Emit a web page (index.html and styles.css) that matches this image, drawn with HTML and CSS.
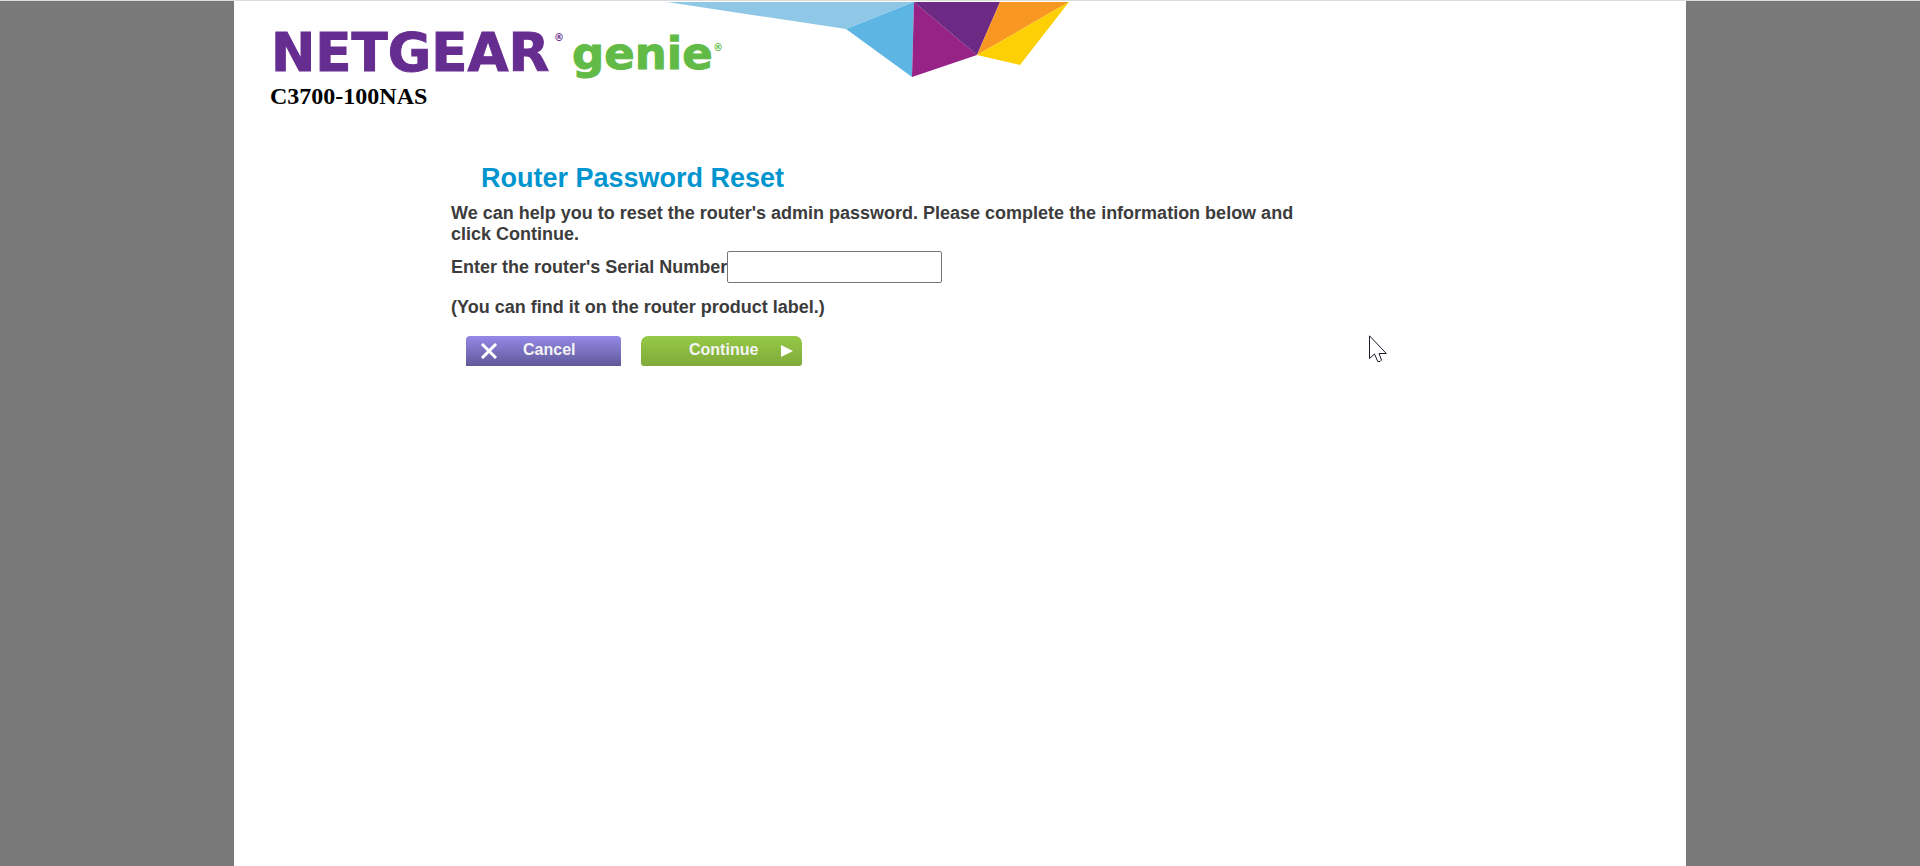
FILE: index.html
```
<!DOCTYPE html>
<html lang="en">
<head>
<meta charset="utf-8">
<title>NETGEAR genie - Router Password Reset</title>
<link rel="stylesheet" href="styles.css">
</head>
<body>
<div class="page">
  <header class="header">
    <svg class="banner" width="800" height="80" viewBox="-1 0 800 80" role="img" aria-label="NETGEAR genie">
      <path fill="#8fc8e6" d="M396 0H643L575 27Z"/>
      <path fill="#5db5e4" d="M643 0L641 75L575 27Z"/>
      <path fill="#962385" d="M643 0L706 53L641 75Z"/>
      <path fill="#6c2a85" d="M643 0H729L706 53Z"/>
      <path fill="#f89722" d="M729 0H798L706 53Z"/>
      <path fill="#fdd006" d="M798 0L749 63L706 53Z"/>
      <text class="brand" x="0" y="69">NETGEAR</text>
      <text class="mark brand-mark" x="283" y="39">®</text>
      <text class="product" x="301" y="67">genie</text>
      <text class="mark product-mark" x="442" y="49">®</text>
    </svg>
    <p class="model">C3700-100NAS</p>
  </header>
  <main class="content">
    <h1 class="title">Router Password Reset</h1>
    <form class="form">
      <p class="intro">We can help you to reset the router's admin password. Please complete the information below and click Continue.</p>
      <div class="field">
        <label for="serial">Enter the router's Serial Number</label>
        <input class="serial" id="serial" type="text">
      </div>
      <p class="hint">(You can find it on the router product label.)</p>
      <div class="actions">
        <button class="button cancel" type="button">
          <svg class="icon" width="16" height="16" viewBox="0 0 16 16" aria-hidden="true"><path d="M2 2L14 14M14 2L2 14" stroke="#fff" stroke-width="3" stroke-linecap="square"/></svg>
          <span>Cancel</span>
        </button>
        <button class="button continue" type="submit">
          <span>Continue</span>
          <svg class="icon" width="12" height="14" viewBox="0 0 12 14" aria-hidden="true"><path d="M0 1L12 7L0 13Z" fill="#fff"/></svg>
        </button>
      </div>
    </form>
  </main>
  <svg class="cursor" width="19" height="28" viewBox="0 0 19 28" aria-hidden="true"><path d="M.5 .8V23.5L5.5 19L8.8 26.5H11L12.5 25L10 18.5H17.3Z" fill="#fff" stroke="#1c1c2c"/></svg>
</div>
</body>
</html>
```
FILE: styles.css
```
body {
  display: flex;
  justify-content: center;
  box-sizing: border-box;
  min-height: 100vh;
  margin: 0;
  background: #797979;
  border-top: 1px solid #dcdcdc;
  font-family: "Liberation Sans", Arial, sans-serif;
}

.page {
  position: relative;
  box-sizing: border-box;
  width: 100%;
  max-width: 1452px;
  padding-top: 1px;
  background: #fff;
}

.header {
  padding-left: 36px;
}

.banner {
  display: block;
  max-width: 100%;
  overflow: visible;
}

.brand {
  font: bold 53px "DejaVu Sans", sans-serif;
  fill: #662d91;
  stroke: #662d91;
  stroke-width: 1px;
}

.product {
  font: bold 45px "DejaVu Sans", sans-serif;
  fill: #62bb46;
  stroke: #62bb46;
  stroke-width: 1px;
}

.mark {
  font: bold 10px "DejaVu Sans", sans-serif;
}

.brand-mark {
  fill: #662d91;
}

.product-mark {
  fill: #62bb46;
}

.model {
  margin: 0;
  font: bold 24px/28px "Liberation Serif", "Times New Roman", serif;
  color: #000;
}

.content {
  max-width: 860px;
  margin: 52px 0 0 217px;
}

.title {
  margin: 0 0 9px 30px;
  font-size: 27px;
  font-weight: bold;
  line-height: 32px;
  color: #0095cf;
}

.form {
  font-size: 18px;
  font-weight: bold;
  line-height: 21px;
  color: #3c3c3c;
}

.intro,
.hint {
  margin: 0;
}

.field {
  display: flex;
  align-items: center;
  margin: 6px 0 14px;
}

.serial {
  box-sizing: border-box;
  width: 215px;
  height: 32px;
  padding: 1px 4px;
  border: 1px solid #767676;
  border-radius: 2px;
  background: #fff;
  font: 18px "Liberation Sans", Arial, sans-serif;
}

.actions {
  display: flex;
  gap: 20px;
  margin: 18px 0 0 15px;
}

.button {
  display: flex;
  align-items: center;
  height: 30px;
  padding: 0;
  border: 0;
  font: bold 16px/28px "Liberation Sans", Arial, sans-serif;
  color: #f4f4f4;
}

.button span {
  padding-bottom: 2px;
}

.cancel {
  width: 155px;
  gap: 26px;
  padding-left: 15px;
  border-radius: 4px 4px 0 0;
  background: linear-gradient(#9489e8, #5f5999);
}

.continue {
  width: 161px;
  gap: 23px;
  padding-left: 48px;
  border-radius: 7px 7px 3px 3px;
  background: linear-gradient(#95c947, #80aa39);
}

.cursor {
  position: absolute;
  left: 1135px;
  top: 334px;
}
```
